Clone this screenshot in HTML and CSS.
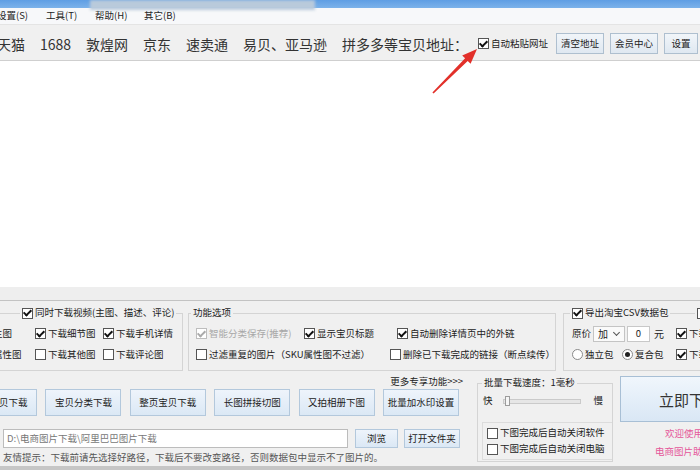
FILE: index.html
```html
<!DOCTYPE html>
<html lang="zh-CN">
<head>
<meta charset="utf-8">
<title>电商图片助手</title>
<link rel="stylesheet" href="styles.css">
</head>
<body>
<div class="app">
  <div class="titlebar"><div class="title-blur"></div></div>
  <div class="menubar">
    <span class="menu">设置(S)</span>
    <span class="menu">工具(T)</span>
    <span class="menu">帮助(H)</span>
    <span class="menu">其它(B)</span>
  </div>
  <div class="toolbar">
    <div class="sites">
      <span>天猫</span><span>1688</span><span>敦煌网</span><span>京东</span><span>速卖通</span><span>易贝、亚马逊</span><span>拼多多等宝贝地址：</span>
    </div>
    <span class="chk autopaste"><i class="cb on"></i>自动粘贴网址</span>
    <button class="tbtn w48 first">清空地址</button>
    <button class="tbtn w48">会员中心</button>
    <button class="tbtn w34">设置</button>
  </div>
  <div class="content"></div>
  <div class="panel">
    <div class="strip"></div>
    <div class="groups">
      <div class="group g1">
        <div class="legends">
          <span class="legend lg1"><span class="chk"><i class="cb on"></i>同时下载视频(主图、描述、评论)</span></span>
        </div>
        <div class="row first-row">
          <span class="chk c1"><i class="cb on"></i>下载主图</span>
          <span class="chk c2"><i class="cb on"></i>下载细节图</span>
          <span class="chk"><i class="cb on"></i>下载手机详情</span>
        </div>
        <div class="row">
          <span class="chk c1"><i class="cb on"></i>下载属性图</span>
          <span class="chk c2"><i class="cb"></i>下载其他图</span>
          <span class="chk"><i class="cb"></i>下载评论图</span>
        </div>
      </div>
      <div class="group g2">
        <div class="legends">
          <span class="legend lg2">功能选项</span>
        </div>
        <div class="row first-row pad7">
          <span class="chk dis w108"><i class="cb on"></i>智能分类保存(推荐)</span>
          <span class="chk w93"><i class="cb on"></i>显示宝贝标题</span>
          <span class="chk"><i class="cb on"></i>自动删除详情页中的外链</span>
        </div>
        <div class="row pad7">
          <span class="chk w194"><i class="cb"></i>过滤重复的图片（SKU属性图不过滤）</span>
          <span class="chk"><i class="cb"></i>删除已下载完成的链接（断点续传）</span>
        </div>
      </div>
      <div class="group g3">
        <div class="legends">
          <span class="legend lg3"><span class="chk"><i class="cb on"></i>导出淘宝CSV数据包</span></span>
          <span class="legend lg4"><span class="chk"><i class="cb"></i>下载</span></span>
        </div>
        <div class="row first-row pad8">
          <span class="price">原价</span>
          <span class="select">加<span class="chev"></span></span>
          <span class="num">0</span>
          <span class="unit">元</span>
          <span class="chk"><i class="cb on"></i>下载</span>
        </div>
        <div class="row pad8">
          <span class="opt w50"><i class="rd"></i>独立包</span>
          <span class="opt w54"><i class="rd on"></i>复合包</span>
          <span class="chk"><i class="cb on"></i>下载</span>
        </div>
      </div>
    </div>
    <div class="lower">
      <div class="leftcol">
        <div class="more">更多专享功能&gt;&gt;&gt;</div>
        <div class="btnrow">
          <button class="btn">单个宝贝下载</button>
          <button class="btn">宝贝分类下载</button>
          <button class="btn">整页宝贝下载</button>
          <button class="btn">长图拼接切图</button>
          <button class="btn">又拍相册下图</button>
          <button class="btn">批量加水印设置</button>
        </div>
        <div class="pathrow">
          <div class="path">D:\电商图片下载\阿里巴巴图片下载</div>
          <button class="btn small browse">浏览</button>
          <button class="btn small open">打开文件夹</button>
        </div>
        <div class="tip">友情提示：下载前请先选择好路径，下载后不要改变路径，否则数据包中显示不了图片的。</div>
      </div>
      <div class="group batch">
        <div class="legends">
          <span class="legend lg5">批量下载速度：1毫秒</span>
        </div>
        <div class="speed">
          <span>快</span>
          <div class="track"><div class="thumb"></div></div>
          <span class="slow">慢</span>
        </div>
        <div class="inner">
          <span class="chk line"><i class="cb"></i>下图完成后自动关闭软件</span>
          <span class="chk line"><i class="cb"></i>下图完成后自动关闭电脑</span>
        </div>
      </div>
      <div class="rightcol">
        <button class="bigbtn">立即下载</button>
        <div class="welcome">欢迎使用</div>
        <div class="product">电商图片助手</div>
      </div>
    </div>
  </div>
</div>
<svg class="arrow" width="700" height="470" viewBox="0 0 700 470">
  <polygon points="432.4,92.4 465.1,58.3 462.2,55.4 477,49 470.6,63.8 467.7,60.9 433.6,93.6" fill="#e2302a"/>
</svg>
</body>
</html>
```
FILE: styles.css
```css
* { box-sizing: border-box; margin: 0; padding: 0; }
html, body { width: 700px; height: 470px; overflow: hidden; }
body {
  position: relative;
  background: #f0f0f0;
  font-family: "Noto Sans CJK SC", "Noto Sans", sans-serif;
  font-size: 9.5px;
  color: #222;
  line-height: 1;
}
button { font: inherit; color: inherit; cursor: default; }
.app { display: flex; flex-direction: column; width: 700px; height: 470px; overflow: hidden; }

.titlebar { height: 8px; flex: none; background: linear-gradient(#5f9ee4, #7cb2ea); }
.title-blur { position: absolute; left: 90px; top: 0; width: 225px; height: 10px; background: #b9cadb; filter: blur(1.5px); }

.menubar { height: 16px; flex: none; display: flex; align-items: center; background: #f7f8fa; }
.menu { width: 49px; flex: none; }
.menu:first-child { margin-left: -3px; }

.toolbar {
  height: 37px; flex: none; display: flex; align-items: center; padding-top: 2px;
  border-top: 1px solid #e4e4e4; border-bottom: 1px solid #cfcfcf; background: #f0f0f0;
}
.sites { display: flex; gap: 15px; margin-left: -3px; font-size: 14px; color: #333; white-space: nowrap; flex: none; }
.autopaste { margin-left: 10px; }
.tbtn {
  height: 21px; flex: none; text-align: center;
  background: linear-gradient(#f1f5f9, #dfe8f1); border: 1px solid #aebfcf;
}
.tbtn.first { margin-left: 8px; }
.tbtn + .tbtn { margin-left: 6px; }
.w48 { width: 48px; }
.w34 { width: 34px; }

.content { height: 226px; flex: none; background: #fff; }

.panel { height: 183px; flex: none; display: flex; flex-direction: column; border-bottom: 4px solid #c6c6c6; background: #f0f0f0; }
.strip { height: 14px; flex: none; background: #eeeeee; border-bottom: 1px solid #c3c3c3; }

.groups { display: flex; align-items: flex-start; margin-top: 12px; height: 58px; flex: none; }
.group { border: 1px solid #d4d4d4; height: 58px; flex: none; }
.legends { display: flex; height: 12px; margin-top: -7px; }
.legend { display: inline-flex; align-items: center; height: 12px; padding: 0 2px; background: #f0f0f0; flex: none; }
.row { display: flex; align-items: center; height: 21px; white-space: nowrap; }
.first-row { margin-top: 4px; }
.pad7 { padding-left: 7px; }
.pad8 { padding-left: 8px; }

.g1 { margin-left: -40px; width: 223px; }
.lg1 { margin-left: 59px; }
.c1 { width: 74px; }
.c2 { width: 68px; }

.g2 { margin-left: 5px; width: 368px; }
.lg2 { margin-left: 2px; }
.w108 { width: 108px; }
.w93 { width: 93px; }
.w194 { width: 194px; }

.g3 { margin-left: 7px; width: 160px; }
.lg3 { margin-left: 6px; }
.lg4 { margin-left: 25px; }
.price { width: 21px; flex: none; }
.select {
  width: 32px; height: 16px; flex: none; display: flex; align-items: center; justify-content: space-between;
  padding: 0 5px 0 4px; background: #fafafa; border: 1px solid #c4c4c4; font-size: 10px;
}
.chev { width: 5px; height: 5px; border: solid #555; border-width: 0 1px 1px 0; transform: translateY(-1px) rotate(45deg); }
.num {
  width: 23px; height: 16px; margin-left: 2px; flex: none; display: flex; align-items: center; justify-content: center;
  background: #fff; border: 1px solid #c8c8c8;
}
.unit { width: 22px; margin-left: 4px; flex: none; font-size: 10px; }
.opt { display: inline-flex; align-items: center; gap: 2px; flex: none; }
.w50 { width: 50px; }
.w54 { width: 54px; }

.chk { display: inline-flex; align-items: center; gap: 2px; white-space: nowrap; flex: none; }
.cb {
  width: 11px; height: 11px; flex: none; display: inline-flex; align-items: center; justify-content: center;
  border: 1px solid #555; background: #fff;
}
.cb.on::after {
  content: ""; width: 3px; height: 6px; border: solid #111; border-width: 0 2px 2px 0;
  transform: translateY(-1px) rotate(45deg);
}
.dis { color: #a8a8a8; }
.dis .cb { border-color: #bdbdbd; }
.dis .cb.on::after { border-color: #aaa; }
.rd {
  width: 11px; height: 11px; flex: none; display: inline-flex; align-items: center; justify-content: center;
  border: 1px solid #8a8a8a; border-radius: 50%; background: #fff;
}
.rd.on::after { content: ""; width: 5px; height: 5px; border-radius: 50%; background: #222; }

.lower { display: flex; align-items: flex-start; height: 95px; flex: none; }
.leftcol { margin-left: -39px; width: 509px; flex: none; display: flex; flex-direction: column; }
.more { height: 11px; margin-top: 5px; line-height: 11px; text-align: right; padding-right: 7px; white-space: nowrap; }
.btnrow { display: flex; gap: 8.4px; margin-top: 2px; height: 27px; }
.btn {
  width: 76px; height: 27px; flex: none; text-align: center; white-space: nowrap;
  background: linear-gradient(#eef4fb, #dbe8f5); border: 1px solid #b3c8dc;
}
.pathrow { display: flex; margin-top: 13px; margin-left: 42px; height: 19px; }
.path {
  width: 345px; height: 19px; flex: none; display: flex; align-items: center; padding-left: 3px;
  background: #fff; border: 1px solid #bcbcbc; color: #777; white-space: nowrap;
}
.btn.small { height: 19px; }
.browse { width: 43px; margin-left: 7px; }
.open { width: 56px; margin-left: 6px; }
.tip { margin-top: 4px; height: 11px; line-height: 11px; padding-left: 42px; color: #555; white-space: nowrap; }

.batch { margin-left: 7px; width: 136px; height: 79px; margin-top: 12px; }
.lg5 { margin-left: 4px; white-space: nowrap; }
.speed { display: flex; align-items: center; height: 16px; margin-top: 4px; padding-left: 5px; }
.track {
  width: 78px; height: 5px; margin-left: 10px; flex: none; display: flex; align-items: center;
  background: #e6e6e6; border: 1px solid #cacaca;
}
.thumb { width: 5px; height: 10px; margin-left: 1px; flex: none; background: #f6f6f6; border: 1px solid #9c9c9c; }
.slow { margin-left: 13px; }
.inner {
  margin: 13px 0 0 4px; height: 38px; display: flex; flex-direction: column; padding: 2px 0 0 4px;
  border: 1px solid #dcdcdc; border-right: none;
}
.line { height: 16px; }

.rightcol { margin-left: 7px; width: 100px; flex: none; display: flex; flex-direction: column; }
.bigbtn {
  width: 100px; height: 46px; margin-top: 5px; padding-left: 38px; text-align: left; font-size: 15px; color: #333;
  white-space: nowrap; overflow: hidden;
  background: linear-gradient(#f0f6fc, #d9e7f5); border: 1px solid #a8bfd5;
}
.welcome { margin-top: 5px; height: 12px; line-height: 12px; padding-left: 45px; color: #e5579a; white-space: nowrap; }
.product { margin-top: 6px; height: 12px; line-height: 12px; padding-left: 35px; color: #e5579a; white-space: nowrap; }

.arrow { position: absolute; left: 0; top: 0; pointer-events: none; }
```
